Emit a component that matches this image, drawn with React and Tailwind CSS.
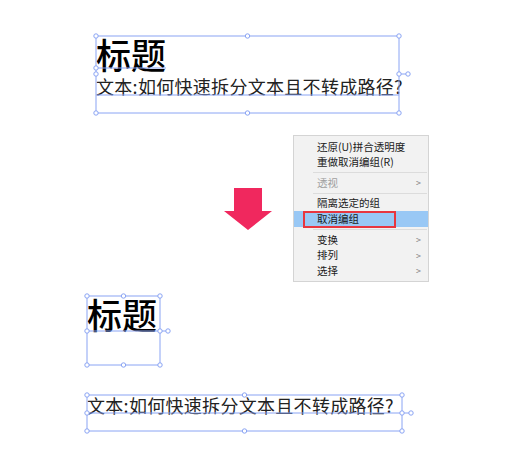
import React from 'react'

const BLUE = '#8aa4f4'

// small round handle on a selection box
function Handle({ x, y }) {
  return <circle cx={x} cy={y} r="2.2" fill="#fff" stroke={BLUE} strokeWidth="1" />
}

function SelBox({ x, y, w, h, mid, baseline, extra }) {
  const r = x + w
  const b = y + h
  const cx = x + w / 2
  return (
    <g>
      <rect x={x} y={y} width={w} height={h} fill="none" stroke={BLUE} strokeWidth="1" />
      {baseline && (
        <line x1={x} y1={baseline.y} x2={baseline.x2} y2={baseline.y} stroke={BLUE} strokeWidth="1" />
      )}
      <line x1={r} y1={mid} x2={r + extra} y2={mid} stroke={BLUE} strokeWidth="1" />
      <Handle x={x} y={y} />
      <Handle x={cx} y={y} />
      <Handle x={r} y={y} />
      <Handle x={x} y={mid} />
      <Handle x={r} y={mid} />
      <Handle x={r + extra} y={mid} />
      <Handle x={x} y={b} />
      <Handle x={cx} y={b} />
      <Handle x={r} y={b} />
    </g>
  )
}

const MENU = [
  { label: '还原(U)拼合透明度' },
  { label: '重做取消编组(R)' },
  { sep: true },
  { label: '透视', disabled: true, sub: true },
  { sep: true },
  { label: '隔离选定的组' },
  { label: '取消编组', active: true },
  { sep: true },
  { label: '变换', sub: true },
  { label: '排列', sub: true },
  { label: '选择', sub: true },
]

function ContextMenu() {
  return (
    <div className="absolute left-[293px] top-[135px] flex w-[136px] flex-col border border-[#d4d4d4] bg-[#f2f2f2] pb-[2px] pt-[3px] text-[10.5px] leading-none text-[#1a1a1a]">
      {MENU.map((m, i) =>
        m.sep ? (
          <div key={i} className="my-[2px] ml-[19px] mr-[1px] h-px bg-[#dcdcdc]" />
        ) : (
          <div
            key={i}
            className={
              'relative flex h-[15.5px] items-center pl-[23px] pr-[7px] ' +
              (m.active ? 'h-[16px] bg-[#99c8f5] ' : '') +
              (m.disabled ? 'text-[#a0a0a0]' : '')
            }
          >
            <span className="flex-1">{m.label}</span>
            {m.sub && <span className="text-[9px] text-[#808080]">&gt;</span>}
            {m.active && (
              <div className="absolute left-[9px] top-0 h-[17px] w-[93px] border-2 border-[#e8363f]" />
            )}
          </div>
        )
      )}
    </div>
  )
}

export default function App() {
  return (
    <div
      className="relative h-[460px] w-[516px] overflow-hidden bg-white"
      style={{ fontFamily: '"Noto Sans CJK SC", "Noto Sans", sans-serif' }}
    >
      {/* before: one group */}
      <div className="absolute left-[96px] top-[36px] flex flex-col gap-[6px] leading-none">
        <div className="text-[35px] font-medium text-black">标题</div>
        <div className="text-[18px] tracking-[0.3px] text-[#222]">文本:如何快速拆分文本且不转成路径?</div>
      </div>

      {/* after: ungrouped */}
      <div className="absolute left-[87px] top-[296px] text-[35px] font-medium leading-none text-black">标题</div>
      <div className="absolute left-[87px] top-[396px] text-[18px] leading-none tracking-[0.3px] text-[#222]">
        文本:如何快速拆分文本且不转成路径?
      </div>

      <svg className="absolute left-0 top-0" width="516" height="460" viewBox="0 0 516 460">
        <SelBox x={96} y={36} w={303} h={77} mid={74} baseline={{ y: 68, x2: 166 }} extra={9} />
        <line x1={96} y1={95} x2={399} y2={95} stroke={BLUE} strokeWidth="1" />
        <Handle x={96} y={68} />
        <SelBox x={87} y={296} w={73} h={69} mid={331} baseline={{ y: 331, x2: 160 }} extra={8} />
        <SelBox x={87} y={395} w={315} h={36} mid={413} baseline={{ y: 413, x2: 402 }} extra={9} />
        {/* arrow */}
        <polygon points="234,188 262,188 262,211 272,211 248,230 224,211 234,211" fill="#f0285e" />
      </svg>

      <ContextMenu />
    </div>
  )
}
